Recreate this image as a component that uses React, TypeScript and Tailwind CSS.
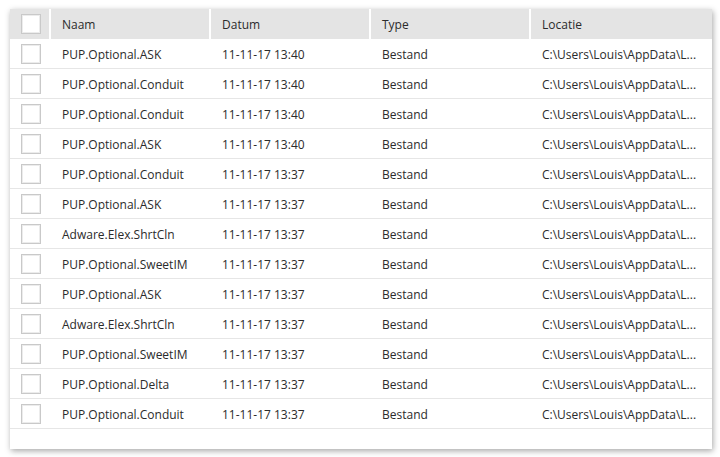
import React from "react";

const rows: [string, string][] = [
  ["PUP.Optional.ASK", "11-11-17 13:40"],
  ["PUP.Optional.Conduit", "11-11-17 13:40"],
  ["PUP.Optional.Conduit", "11-11-17 13:40"],
  ["PUP.Optional.ASK", "11-11-17 13:40"],
  ["PUP.Optional.Conduit", "11-11-17 13:37"],
  ["PUP.Optional.ASK", "11-11-17 13:37"],
  ["Adware.Elex.ShrtCln", "11-11-17 13:37"],
  ["PUP.Optional.SweetIM", "11-11-17 13:37"],
  ["PUP.Optional.ASK", "11-11-17 13:37"],
  ["Adware.Elex.ShrtCln", "11-11-17 13:37"],
  ["PUP.Optional.SweetIM", "11-11-17 13:37"],
  ["PUP.Optional.Delta", "11-11-17 13:37"],
  ["PUP.Optional.Conduit", "11-11-17 13:37"],
];

function Box() {
  return <div className="w-[20px] h-[20px] bg-white border border-[#c9c9c9] shadow-[inset_0_0_0_1px_#ececec]" />;
}

export default function App() {
  const cols = "grid grid-cols-[39px_158px_158px_158px_1fr] gap-x-[2px]";
  const head = "flex items-center pl-[11px] pt-[2px] bg-[#e4e4e4]";
  const cell = "flex items-center pl-[11px] pt-[2px]";
  return (
    <div className="w-[720px] h-[457px] bg-white pt-[9px] pl-[10px]" style={{ fontFamily: '"Open Sans", "Noto Sans", sans-serif' }}>
      <div className="w-[702px] h-[440px] bg-white shadow-[1px_2px_6px_rgba(0,0,0,0.35)] text-[12px] text-[#2b2b2b]">
        <div className={`${cols} h-[30px] bg-white`}>
          <div className="flex items-center pl-[11px] bg-[#e4e4e4]"><Box /></div>
          <div className={head}>Naam</div>
          <div className={head}>Datum</div>
          <div className={head}>Type</div>
          <div className={head}>Locatie</div>
        </div>
        {rows.map(([name, date], i) => (
          <div key={i} className={`${cols} h-[30px] border-b border-[#e6e6e6]`}>
            <div className="flex items-center pl-[11px]"><Box /></div>
            <div className={cell}>{name}</div>
            <div className={cell}>{date}</div>
            <div className={cell}>Bestand</div>
            <div className={`${cell} whitespace-nowrap`}>C:\Users\Louis\AppData\L...</div>
          </div>
        ))}
      </div>
    </div>
  );
}
